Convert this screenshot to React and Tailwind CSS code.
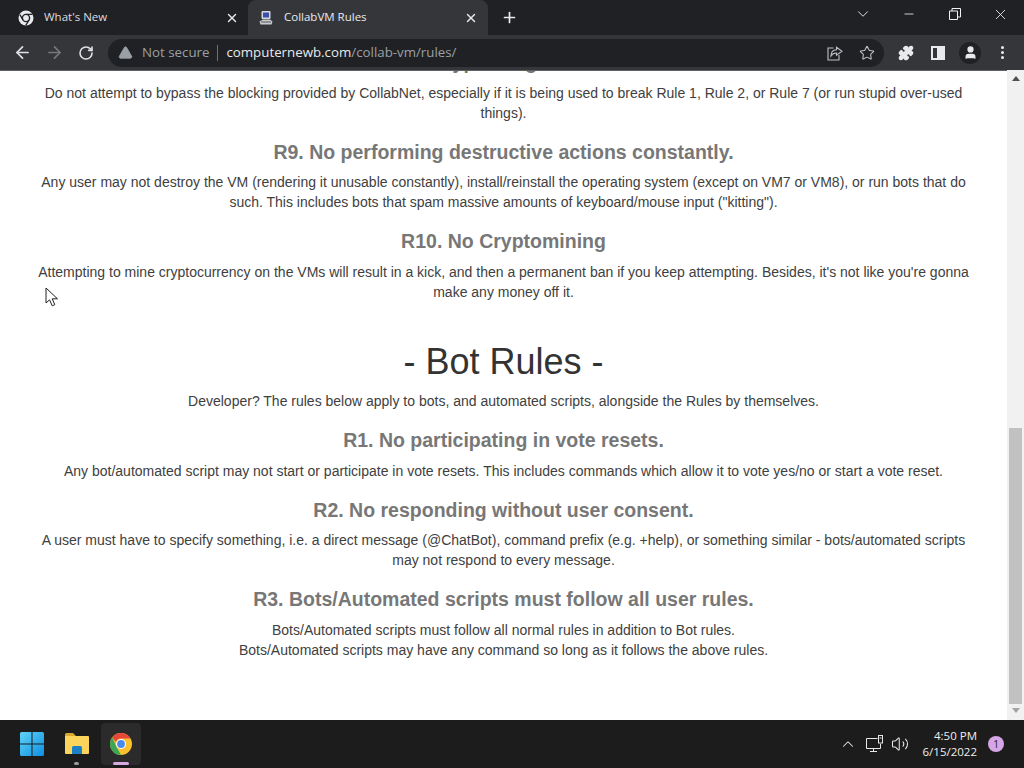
import React from "react";
import { ArrowLeft, ArrowRight, RotateCw, Star, Puzzle, User, X, Plus, ChevronDown, ChevronUp, Minus, Volume2, TriangleAlert } from "lucide-react";

const sans = "font-['Liberation_Sans',Arial,sans-serif]";
const ui = "font-['Open_Sans','Noto_Sans',sans-serif]";

const ChromeLogo = ({ size = 16 }) => (
  <svg width={size} height={size} viewBox="0 0 16 16">
    <circle cx="8" cy="8" r="7.5" fill="#e8eaed" />
    <circle cx="8" cy="8" r="3.6" fill="#e8eaed" stroke="#202124" strokeWidth="1.4" />
    <path d="M8 4.4h6.4M5 10 1.9 4.6M11 10l-3.2 5.3" stroke="#202124" strokeWidth="1.3" fill="none" />
  </svg>
);

const VmIcon = () => (
  <svg width="16" height="16" viewBox="0 0 16 16">
    <rect x="3.5" y="1" width="9" height="8" rx="1" fill="#d5d8dc" />
    <rect x="5" y="2.5" width="6" height="5" fill="#3b4ea8" />
    <path d="M1.5 11.5 5 9.5h7l2.5 2-1 3h-11z" fill="#c8cbcf" />
    <path d="M3 12h10" stroke="#555" strokeWidth="1" />
  </svg>
);

const Tab = ({ icon, title, active }) => (
  <div className={`relative flex h-[35px] w-[240px] items-center pl-[10px] ${active ? "rounded-t-lg bg-[#35363a] pr-[9px] text-[#e8eaed]" : "pr-[8px] text-[#dadce0]"}`}>
    <span className="mr-[10px] flex w-[16px] shrink-0 justify-center">{icon}</span>
    <span className={`${ui} -mt-[2px] flex-1 text-[11.5px] leading-none`}>{title}</span>
    <X size={14} strokeWidth={2.4} className="mr-[1px] text-[#e8eaed]" />
  </div>
);

const Rule = ({ title, children }) => (
  <>
    <h3 className="mt-[18.8px] mb-[9.25px] text-[19.5px] font-bold leading-[21.45px] text-[#777]">{title}</h3>
    <p className="mb-[10px]">{children}</p>
  </>
);

const WinLogo = () => (
  <svg width="24" height="24" viewBox="0 0 24 24">
    <defs>
      <linearGradient id="win" x1="0" y1="0" x2="1" y2="1">
        <stop offset="0" stopColor="#5fd3f8" />
        <stop offset="1" stopColor="#0f8fe0" />
      </linearGradient>
    </defs>
    <path d="M0 1.5A1.5 1.5 0 0 1 1.5 0h10v11.5H0zM12.5 0h10A1.5 1.5 0 0 1 24 1.5v10H12.5zM0 12.5h11.5V24h-10A1.5 1.5 0 0 1 0 22.5zM12.5 12.5H24v10a1.5 1.5 0 0 1-1.5 1.5h-10z" fill="url(#win)" />
  </svg>
);

const Folder = () => (
  <svg width="26" height="24" viewBox="0 0 26 24">
    <path d="M1 2.5A1.5 1.5 0 0 1 2.5 1h6.5l3 3h-11z" fill="#d9a92f" />
    <path d="M1 4h23a1 1 0 0 1 1 1v16a1 1 0 0 1-1 1H2a1 1 0 0 1-1-1z" fill="#fbd45c" />
    <path d="M8 15.5A1.5 1.5 0 0 1 9.5 14h7a1.5 1.5 0 0 1 1.5 1.5V22H8z" fill="#1d7fc4" />
  </svg>
);

const Chrome = () => (
  <svg width="22" height="22" viewBox="0 0 22 22">
    <circle cx="11" cy="11" r="11" fill="#fbc02d" />
    <path d="M11 0a11 11 0 0 1 9.5 5.5H11A5.5 5.5 0 0 0 5.9 9L2.2 4.4A11 11 0 0 1 11 0z" fill="#e5483a" />
    <path d="M2.2 4.4 6.4 13.8 11 22A11 11 0 0 1 2.2 4.4z" fill="#3ba655" />
    <circle cx="11" cy="11" r="5" fill="#fff" />
    <circle cx="11" cy="11" r="3.9" fill="#4a8af0" />
  </svg>
);

const NetIcon = () => (
  <svg width="20" height="18" viewBox="0 0 20 18" fill="none" stroke="#e8e8e8" strokeWidth="1">
    <path d="M12.5 3.5H1.5v10h14V9M8.5 13.5v3M5 16.5h7" />
    <rect x="13.5" y="0.5" width="4" height="7.5" />
    <path d="M14.5 3h2" />
  </svg>
);

const ShareIcon = () => (
  <svg width="16" height="16" viewBox="0 0 16 16" fill="none" stroke="#bdc1c6" strokeWidth="1.1">
    <path d="M6.5 3H1v12h11V10" />
    <path d="M9.5 2.2 15 6.2l-5.5 4V8C7 8 5 9.2 4 11c0-3.5 2-6 5.5-6.2z" />
  </svg>
);

export default function App() {
  return (
    <div className="flex h-[768px] w-[1024px] flex-col overflow-hidden bg-white">
      {/* barra de abas */}
      <div className="flex h-[35px] shrink-0 items-end bg-[#202124] pl-[8px]">
        <Tab icon={<ChromeLogo />} title="What's New" />
        <Tab icon={<VmIcon />} title="CollabVM Rules" active />
        <Plus size={17} strokeWidth={2.4} className="ml-[13px] mb-[9px] text-[#e8eaed]" />
        <div className="flex-1" />
        <div className="flex h-[28px] items-center self-start text-[#f1f3f4]">
          <ChevronDown size={18} strokeWidth={1.2} className="mr-[30px]" />
          <Minus size={14} strokeWidth={1.4} className="mr-[33px]" />
          <svg width="12" height="12" viewBox="0 0 12 12" fill="none" stroke="currentColor" className="mr-[31px]">
            <path d="M.5 3h8v8.500h-8zM3 3V.5h8.500v8.500H8.500" />
          </svg>
          <X size={17} strokeWidth={1.2} className="mr-[15px]" />
        </div>
      </div>

      {/* barra de endereco */}
      <div className="flex h-[35px] shrink-0 items-center bg-[#35363a] pl-[13px] text-[#dee1e6]">
        <ArrowLeft size={19} strokeWidth={2.2} />
        <ArrowRight size={19} strokeWidth={2.2} className="ml-[13px] text-[#75777b]" />
        <RotateCw size={16} strokeWidth={2.4} className="ml-[14px]" />
        <div className="ml-[14px] flex h-[28px] w-[776px] items-center rounded-full bg-[#202124] pl-[10px] pr-[9px]">
          <TriangleAlert size={15} fill="#9aa0a6" strokeWidth={1.5} className="text-[#9aa0a6]" />
          <span className={`${ui} ml-[9px] text-[13.3px] leading-none text-[#9aa0a6]`}>Not secure</span>
          <span className="mx-[8px] h-[16px] w-px bg-[#6d7074]" />
          <span className={`${ui} flex-1 text-[13.3px] leading-none text-[#9aa0a6]`}>
            <span className="text-[#e8eaed]">computernewb.com</span>/collab-vm/rules/
          </span>
          <ShareIcon />
          <Star size={16} strokeWidth={1.6} className="ml-[16px] text-[#bdc1c6]" />
        </div>
        <Puzzle size={16} fill="#e8eaed" className="ml-[14px] text-[#e8eaed]" />
        <span className="ml-[17px] flex h-[14px] w-[14px] justify-end border-[2px] border-[#e8eaed]">
          <span className="h-full w-[6px] bg-[#e8eaed]" />
        </span>
        <span className="ml-[14px] flex h-[22px] w-[22px] items-center justify-center rounded-full bg-[#202124]">
          <User size={15} fill="#e8eaed" className="text-[#e8eaed]" />
        </span>
        <span className="ml-[19.5px] flex flex-col gap-[2px]">
          <span className="h-[3px] w-[3px] rounded-full bg-[#e8eaed]" />
          <span className="h-[3px] w-[3px] rounded-full bg-[#e8eaed]" />
          <span className="h-[3px] w-[3px] rounded-full bg-[#e8eaed]" />
        </span>
      </div>

      {/* pagina */}
      <div className="flex min-h-0 flex-1">
        <main className={`${sans} relative min-w-0 flex-1 overflow-hidden border-t border-[#5f6064] text-center text-[14px] leading-[20px] text-[#404040]`}>
          <div className="mx-auto -mt-[19px] w-[940px]">
            <h3 className="mb-[9.4px] text-[19.5px] font-bold leading-[21.45px] text-[#777]">R8. No bypassing CollabNet</h3>
            <p className="mb-[10px]">
              Do not attempt to bypass the blocking provided by CollabNet, especially if it is being used to break Rule 1, Rule 2, or Rule 7 (or run stupid over-used things).
            </p>
            <Rule title="R9. No performing destructive actions constantly.">
              Any user may not destroy the VM (rendering it unusable constantly), install/reinstall the operating system (except on VM7 or VM8), or run bots that do such. This includes bots that spam massive amounts of keyboard/mouse input ("kitting").
            </Rule>
            <Rule title="R10. No Cryptomining">
              Attempting to mine cryptocurrency on the VMs will result in a kick, and then a permanent ban if you keep attempting. Besides, it's not like you're gonna make any money off it.
            </Rule>
            <h1 className="mt-[40px] mb-[9.6px] text-[36px] font-normal leading-[40px] text-[#333]">- Bot Rules -</h1>
            <p className="mb-[10px]">Developer? The rules below apply to bots, and automated scripts, alongside the Rules by themselves.</p>
            <Rule title="R1. No participating in vote resets.">
              Any bot/automated script may not start or participate in vote resets. This includes commands which allow it to vote yes/no or start a vote reset.
            </Rule>
            <Rule title="R2. No responding without user consent.">
              A user must have to specify something, i.e. a direct message (@ChatBot), command prefix (e.g. +help), or something similar - bots/automated scripts may not respond to every message.
            </Rule>
            <Rule title="R3. Bots/Automated scripts must follow all user rules.">
              Bots/Automated scripts must follow all normal rules in addition to Bot rules.
              <br />
              Bots/Automated scripts may have any command so long as it follows the above rules.
            </Rule>
          </div>
          {/* cursor do mouse */}
          <svg width="14" height="20" viewBox="0 0 14 20" className="absolute left-[45px] top-[216px]">
            <path d="M1 1v15l3.600-3.200 2.600 6 2.600-1.100-2.600-5.900H12.500z" fill="#fff" stroke="#222" strokeWidth="1" />
          </svg>
        </main>
        <aside className="flex w-[17px] shrink-0 flex-col items-center bg-[#f1f1f1]">
          <span className="mt-[6px] h-0 w-0 border-x-[4px] border-b-[5px] border-x-transparent border-b-[#505050]" />
          <span className="mt-[347px] h-[276px] w-[13px] bg-[#c1c1c1]" />
          <span className="mt-[4px] h-0 w-0 border-x-[4px] border-t-[5px] border-x-transparent border-t-[#a3a3a3]" />
        </aside>
      </div>

      {/* barra de tarefas */}
      <div className="flex h-[48px] shrink-0 items-center bg-[#1c1c1c] text-white">
        <div className="ml-[20px] flex items-center"><WinLogo /></div>
        <div className="relative ml-[20px] flex items-center">
          <Folder />
          <span className="absolute left-[10px] top-[30px] h-[3px] w-[5px] rounded-full bg-[#9a9a9a]" />
        </div>
        <div className="relative ml-[11px] flex h-[42px] w-[40px] items-center justify-center rounded-[4px] bg-[#2b2b2b]">
          <Chrome />
          <span className="absolute bottom-[0px] left-[12px] h-[3px] w-[16px] rounded-full bg-[#d8a8e0]" />
        </div>
        <div className="flex-1" />
        <ChevronUp size={18} strokeWidth={1.4} className="text-[#e8e8e8]" />
        <span className="ml-[8px] flex"><NetIcon /></span>
        <Volume2 size={18} strokeWidth={1.4} className="ml-[6px] text-[#e8e8e8]" />
        <div className={`${ui} ml-[6px] w-[62px] text-right text-[11.5px] leading-[16px] text-[#eee]`}>
          <div>4:50 PM</div>
          <div>6/15/2022</div>
        </div>
        <span className={`${ui} ml-[11px] mr-[20px] flex h-[16px] w-[16px] items-center justify-center rounded-full bg-[#d6a5e6] text-[10px] leading-none text-[#222]`}>1</span>
      </div>
    </div>
  );
}
